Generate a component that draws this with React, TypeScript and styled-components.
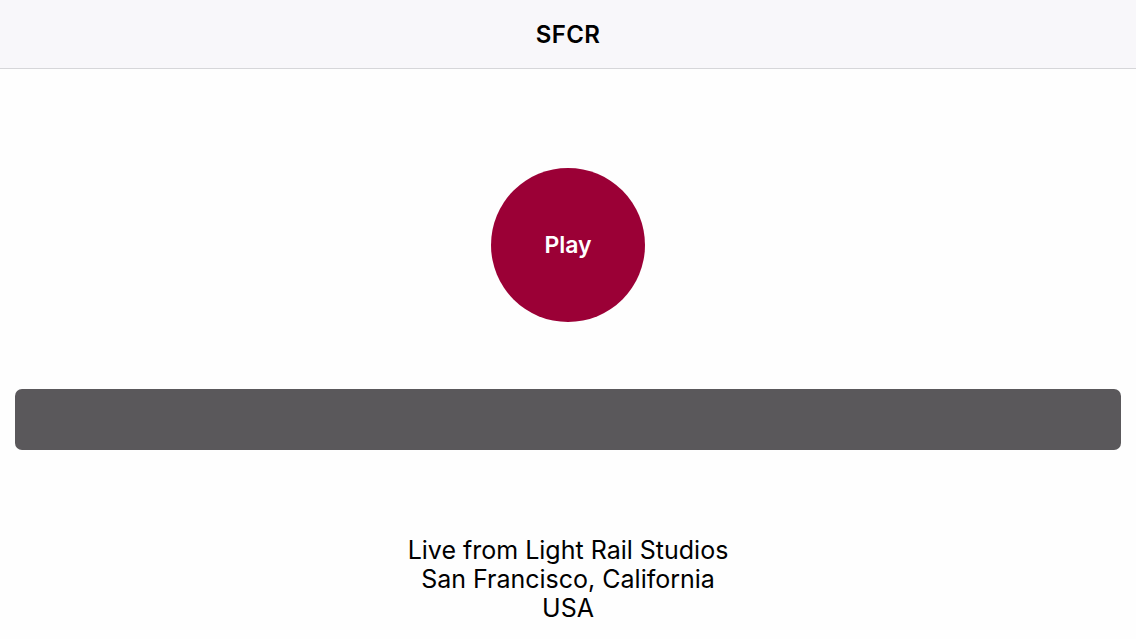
import * as React from "react";
import styled, { createGlobalStyle } from "styled-components";

const GlobalStyle = createGlobalStyle`
    html, body {
        margin: 0;
        padding: 0;
        background: #fefefe;
        font-family: Inter, "Liberation Sans", sans-serif;
        color: #000;
    }
`;

const Page = styled.div`
    width: 1136px;
    height: 639px;
    display: flex;
    flex-direction: column;
    overflow: hidden;
`;

const NavBar = styled.header`
    height: 68px;
    flex-shrink: 0;
    display: flex;
    align-items: center;
    justify-content: center;
    background: #f8f7fa;
    border-bottom: 1px solid #d6d6d9;
`;

const Title = styled.h1`
    margin: 0;
    font-size: 24px;
    font-weight: 600;
    letter-spacing: 0.3px;
`;

const Body = styled.main`
    display: flex;
    flex-direction: column;
    align-items: center;
    padding: 99px 15px 0;
`;

const PlayButton = styled.button`
    width: 154px;
    height: 154px;
    border-radius: 50%;
    border: none;
    background: #9b0036;
    color: #fff;
    font-family: inherit;
    font-size: 23px;
    font-weight: 600;
    cursor: pointer;
`;

const StatusBar = styled.div`
    align-self: stretch;
    height: 61px;
    margin-top: 67px;
    border-radius: 7px;
    background: #5a585b;
`;

const Credits = styled.p`
    margin: 86px 0 0;
    text-align: center;
    font-size: 25px;
    line-height: 29px;
    font-weight: 400;
`;

export default function App(): JSX.Element {
    return (
        <>
            <GlobalStyle />
            <Page>
                <NavBar>
                    <Title>SFCR</Title>
                </NavBar>
                <Body>
                    <PlayButton>Play</PlayButton>
                    <StatusBar />
                    <Credits>
                        Live from Light Rail Studios
                        <br />
                        San Francisco, California
                        <br />
                        USA
                    </Credits>
                </Body>
            </Page>
        </>
    );
}
